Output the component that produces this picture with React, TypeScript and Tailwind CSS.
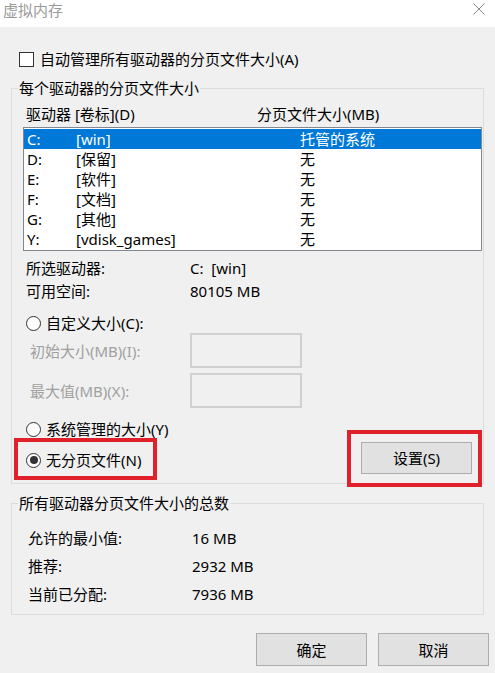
import React from 'react';

const drives = [
  { letter: 'C:', label: '[win]', size: '托管的系统', selected: true },
  { letter: 'D:', label: '[保留]', size: '无' },
  { letter: 'E:', label: '[软件]', size: '无' },
  { letter: 'F:', label: '[文档]', size: '无' },
  { letter: 'G:', label: '[其他]', size: '无' },
  { letter: 'Y:', label: '[vdisk_games]', size: '无' },
];

const totals = [
  ['允许的最小值:', '16 MB'],
  ['推荐:', '2932 MB'],
  ['当前已分配:', '7936 MB'],
];

function Radio({ checked, label }: { checked?: boolean; label: string }) {
  return (
    <div className="flex items-center h-[20px] leading-[20px]">
      <span className="w-[15px] h-[15px] rounded-full border border-[#333] bg-white flex items-center justify-center">
        {checked && <span className="w-[8px] h-[8px] rounded-full bg-[#333]" />}
      </span>
      <span className="ml-[5px]">{label}</span>
    </div>
  );
}

export default function App() {
  return (
    <div
      className="w-[495px] h-[673px] overflow-hidden bg-[#f0f0f0] text-[15px] leading-[20px] text-black"
      style={{ fontFamily: '"Noto Sans", "Noto Sans CJK SC", sans-serif' }}
    >
      {/* Title bar */}
      <div className="h-[27px] bg-white flex items-start justify-between">
        <span className="ml-[3px] leading-[20px] text-[#9a9a9a]">虚拟内存</span>
        <svg className="mt-[3px] mr-[10px]" width="12" height="12" viewBox="0 0 12 12">
          <path d="M0.5 0.5 L11.5 11.5 M11.5 0.5 L0.5 11.5" stroke="#8a8a8a" strokeWidth="1" fill="none" />
        </svg>
      </div>

      {/* Auto manage */}
      <div className="mt-[22px] ml-[19px] flex items-center h-[20px]">
        <span className="w-[15px] h-[15px] border border-[#333] bg-white" />
        <span className="ml-[6px]">自动管理所有驱动器的分页文件大小(A)</span>
      </div>

      {/* Per drive group */}
      <fieldset className="mt-[9px] ml-[11px] w-[473px] border border-[#dcdcdc] pl-[11px] pr-[1px] pt-[6px] pb-[9px]">
        <legend className="-ml-[5px] px-[1px] leading-[20px]">每个驱动器的分页文件大小</legend>
        <div className="flex h-[20px] pl-[3px]">
          <span className="w-[231px]">驱动器 [卷标](D)</span>
          <span>分页文件大小(MB)</span>
        </div>
        <div className="mt-[3px] h-[124px] border border-[#828790] bg-white pt-[1px]">
          {drives.map((d) => (
            <div
              key={d.letter}
              className={`flex h-[20px] leading-[20px] ${d.selected ? 'bg-[#0078d7] text-white' : ''}`}
            >
              <span className="pl-[3px] w-[52px]">{d.letter}</span>
              <span className="w-[224px]">{d.label}</span>
              <span>{d.size}</span>
            </div>
          ))}
        </div>

        <div className="mt-[7px] flex pl-[3px]">
          <span className="w-[164px]">所选驱动器:</span>
          <span>C:&nbsp;&nbsp;[win]</span>
        </div>
        <div className="mt-[3px] flex pl-[3px]">
          <span className="w-[164px]">可用空间:</span>
          <span>80105 MB</span>
        </div>

        <div className="mt-[12px] pl-[3px]">
          <Radio label="自定义大小(C):" />
        </div>
        <div className="flex items-center h-[35px] pl-[7px] text-[#a0a0a0]">
          <span className="w-[160px]">初始大小(MB)(I):</span>
          <span className="w-[112px] h-[35px] border-2 border-[#d0d0d0] bg-[#f0f0f0]" />
        </div>
        <div className="mt-[5px] flex items-center h-[35px] pl-[7px] text-[#a0a0a0]">
          <span className="w-[160px]">最大值(MB)(X):</span>
          <span className="w-[112px] h-[35px] border-2 border-[#d0d0d0] bg-[#f0f0f0]" />
        </div>

        <div className="mt-[11px] pl-[3px]">
          <Radio label="系统管理的大小(Y)" />
        </div>
        <div className="mt-[3px] mr-[10px] flex items-start justify-between pl-[3px]">
          <div className="relative mt-[8px]">
            <Radio checked label="无分页文件(N)" />
            <div className="absolute left-[-12px] top-[-12px] w-[143px] h-[42px] border-4 border-[#e0202a]" />
          </div>
          <div className="relative">
            <button className="w-[111px] h-[32px] border border-[#adadad] bg-[#e1e1e1] leading-[20px]">设置(S)</button>
            <div className="absolute left-[-14px] top-[-12px] w-[135px] h-[57px] border-4 border-[#e0202a]" />
          </div>
        </div>
      </fieldset>

      {/* Totals group */}
      <fieldset className="mt-[9px] ml-[11px] w-[473px] border border-[#dcdcdc] pl-[16px] pr-[10px] pt-[15px] pb-[10px]">
        <legend className="-ml-[10px] px-[1px] leading-[20px]">所有驱动器分页文件大小的总数</legend>
        <div className="flex flex-col gap-[8px]">
          {totals.map(([k, v]) => (
            <div key={k} className="flex h-[20px]">
              <span className="w-[164px]">{k}</span>
              <span>{v}</span>
            </div>
          ))}
        </div>
      </fieldset>

      {/* Footer buttons */}
      <div className="mt-[18px] flex justify-end gap-[11px] pr-[6px]">
        <button className="w-[111px] h-[33px] border border-[#adadad] bg-[#e1e1e1] leading-[20px]">确定</button>
        <button className="w-[111px] h-[33px] border border-[#adadad] bg-[#e1e1e1] leading-[20px]">取消</button>
      </div>
    </div>
  );
}
